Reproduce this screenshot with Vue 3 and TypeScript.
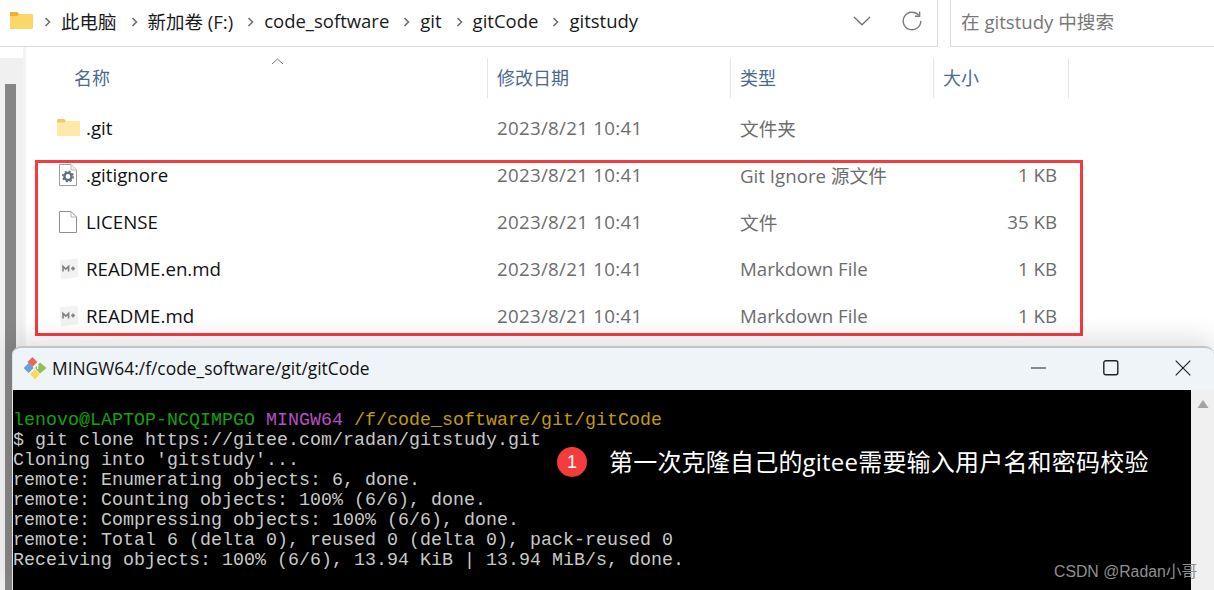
<script setup lang="ts">
interface Row { name: string; date: string; type: string; size: string; icon: string }
const date = '2023/8/21 10:41'
const rows: Row[] = [
  { name: '.git', date, type: '文件夹', size: '', icon: 'folder' },
  { name: '.gitignore', date, type: 'Git Ignore 源文件', size: '1 KB', icon: 'gear' },
  { name: 'LICENSE', date, type: '文件', size: '35 KB', icon: 'file' },
  { name: 'README.en.md', date, type: 'Markdown File', size: '1 KB', icon: 'md' },
  { name: 'README.md', date, type: 'Markdown File', size: '1 KB', icon: 'md' },
]
const crumbs = ['此电脑', '新加卷 (F:)', 'code_software', 'git', 'gitCode', 'gitstudy']
const lines = [
  'Cloning into \'gitstudy\'...',
  'remote: Enumerating objects: 6, done.',
  'remote: Counting objects: 100% (6/6), done.',
  'remote: Compressing objects: 100% (6/6), done.',
  'remote: Total 6 (delta 0), reused 0 (delta 0), pack-reused 0',
  'Receiving objects: 100% (6/6), 13.94 KiB | 13.94 MiB/s, done.',
]
</script>

<template>
  <div class="page">
    <header class="topbar">
      <div class="address">
        <svg class="top-folder" width="23" height="18" viewBox="0 0 23 18">
          <path d="M0 2 Q0 1 1 1 H7 L9 3 H22 Q23 3 23 4 V17 Q23 18 22 18 H1 Q0 18 0 17 Z" fill="#fbd669" />
          <path d="M0 1.5 Q0 1 1 1 H7 L9 3 L7 5 H0 Z" fill="#eeb02f" />
        </svg>
        <template v-for="c in crumbs" :key="c">
          <svg class="chev" width="7" height="10" viewBox="0 0 7 10"><path d="M1.5 1 L5.5 5 L1.5 9" fill="none" stroke="#6f6f6f" stroke-width="1.6" /></svg>
          <span class="crumb">{{ c }}</span>
        </template>
        <div class="addr-tools">
          <svg width="18" height="10" viewBox="0 0 18 10"><path d="M1 1 L9 8.8 L17 1" fill="none" stroke="#6e6e6e" stroke-width="1.2" /></svg>
          <svg width="20" height="20" viewBox="0 0 20 20"><path d="M16.8 4.4 A8.8 8.8 0 1 0 18.8 10" fill="none" stroke="#7a7a7a" stroke-width="1.4" /><path d="M17.6 .6 V5.2 H13" fill="none" stroke="#7a7a7a" stroke-width="1.4" /></svg>
        </div>
      </div>
      <div class="search">在 gitstudy 中搜索</div>
    </header>

    <div class="body">
      <aside class="rail"><div class="thumb"></div></aside>
      <main class="list">
        <div class="head">
          <svg class="sort" width="13" height="7" viewBox="0 0 13 7"><path d="M1 6 L6.5 1 L12 6" fill="none" stroke="#777" stroke-width="1" /></svg>
          <div class="hcell first">名称</div>
          <div class="hcell">修改日期</div>
          <div class="hcell">类型</div>
          <div class="hcell">大小</div>
        </div>
        <div class="rows">
          <div class="row" v-for="r in rows" :key="r.name">
            <div class="name">
              <span class="ico">
                <svg v-if="r.icon === 'folder'" class="ico-folder" width="23" height="18" viewBox="0 0 23 18">
                  <path d="M0 1.5 Q0 1 1 1 H7 L9 3 H22 Q23 3 23 4 V17 Q23 18 22 18 H1 Q0 18 0 17 Z" fill="#fde9a8" />
                  <path d="M0 1.5 Q0 1 1 1 H7 L9 3 L7 4.5 H0 Z" fill="#f1ca6c" />
                </svg>
                <svg v-else-if="r.icon === 'gear'" width="18" height="22" viewBox="0 0 18 22">
                  <path d="M.5 .5 H12 L17.5 6 V21.5 H.5 Z" fill="#fff" stroke="#9aa0a5" />
                  <path d="M12 .5 V6 H17.5" fill="#eee" stroke="#b8bcc0" />
                  <circle cx="9" cy="12.5" r="3.6" fill="none" stroke="#5f7180" stroke-width="2.4" />
                  <circle cx="9" cy="12.5" r="5.2" fill="none" stroke="#5f7180" stroke-width="1.6" stroke-dasharray="2 2.08" />
                </svg>
                <svg v-else-if="r.icon === 'file'" width="18" height="22" viewBox="0 0 18 22">
                  <path d="M.5 .5 H12 L17.5 6 V21.5 H.5 Z" fill="#fff" stroke="#8f8f8f" />
                  <path d="M12 .5 V6 H17.5" fill="none" stroke="#b5b5b5" />
                </svg>
                <svg v-else width="20" height="22" viewBox="0 0 20 22">
                  <path d="M.5 2.5 L18.5 .5 L19.5 19 L2 21.5 Z" fill="#f2f2f2" />
                  <path d="M4 13.5 V8.5 L6.8 11.2 L9.6 8.5 V13.5 M12 10.5 H16 M14 8.5 V12.5" fill="none" stroke="#808080" stroke-width="1.6" />
                </svg>
              </span>
              <span class="fname">{{ r.name }}</span>
            </div>
            <div class="meta date">{{ r.date }}</div>
            <div class="meta">{{ r.type }}</div>
            <div class="meta size">{{ r.size }}</div>
          </div>
          <div class="highlight"></div>
        </div>
      </main>
    </div>

    <section class="terminal">
      <div class="titlebar">
        <svg class="gitlogo" width="24" height="24" viewBox="0 0 24 24">
          <path d="M9.4 1 L14.4 6 L9.4 11 L4.4 6 Z" fill="#e8685a" />
          <path d="M12 12 L17 6.5 L23.4 12 L17 17.5 Z" fill="#8cc152" />
          <path d="M.6 12 L5.6 7 L10.6 12 L5.6 17 Z" fill="#6a9fdf" />
          <path d="M12 13.5 L17 18 L12 23.4 L7 18 Z" fill="#f8d95c" />
          <path d="M14 9 L15.5 10.5 M14.6 13 V9" stroke="#fff" stroke-width="1.2" fill="none" />
        </svg>
        <span class="ttl">MINGW64:/f/code_software/git/gitCode</span>
        <div class="winbtns">
          <svg width="16" height="16" viewBox="0 0 16 16"><path d="M0 8 H15" stroke="#222" stroke-width="1.2" /></svg>
          <svg width="16" height="16" viewBox="0 0 16 16"><rect x=".8" y=".8" width="14" height="14" rx="2" fill="none" stroke="#222" stroke-width="1.4" /></svg>
          <svg width="16" height="16" viewBox="0 0 16 16"><path d="M.7 .7 L15.3 15.3 M15.3 .7 L.7 15.3" stroke="#222" stroke-width="1.2" /></svg>
        </div>
      </div>
      <div class="console">
        <div class="screen">
          <pre class="out"><span class="g">lenovo@LAPTOP-NCQIMPGO</span> <span class="m">MINGW64</span> <span class="y">/f/code_software/git/gitCode</span>
$ git clone https://gitee.com/radan/gitstudy.git
<template v-for="l in lines" :key="l">{{ l }}
</template></pre>
          <div class="note">
            <span class="badge">1</span>
            <span class="note-text">第一次克隆自己的gitee需要输入用户名和密码校验</span>
          </div>
        </div>
        <div class="vscroll"><svg width="12" height="8" viewBox="0 0 12 8"><path d="M6 0 L11.5 8 H.5 Z" fill="#a3a3a3" /></svg></div>
      </div>
      <div class="mark">CSDN @Radan小哥</div>
    </section>
  </div>
</template>

<style scoped>
.page {
  position: relative;
  width: 1214px;
  height: 590px;
  overflow: hidden;
  background: #fff;
  font-family: "Open Sans", "Noto Sans CJK SC", sans-serif;
  color: #1a1a1a;
}
.topbar {
  display: flex;
  height: 47px;
  box-sizing: border-box;
}
.address {
  width: 938px;
  box-sizing: border-box;
  display: flex;
  align-items: center;
  padding: 0 0 5px 10px;
  border-right: 1px solid #d9d9d9;
  border-bottom: 1px solid #d9d9d9;
}
.top-folder { margin-right: 11px; margin-top: -1px; }
.chev { flex: none; margin-top: 3px; }
.crumb { font-size: 18.5px; margin: 0 12px 0 10px; white-space: nowrap; }
.chev + .crumb ~ .chev { margin-left: 2px; }
.addr-tools {
  margin-left: auto;
  display: flex;
  align-items: center;
  gap: 31px;
  padding-right: 15px;
}
.search {
  margin-left: 12px;
  flex: 1;
  border-left: 1px solid #d9d9d9;
  border-bottom: 1px solid #d9d9d9;
  padding: 7px 0 0 10px;
  font-size: 18.6px;
  color: #777;
}
.body { display: flex; height: 543px; }
.rail {
  width: 23px;
  background: #f0f0f0;
  margin-top: 11px;
  box-sizing: border-box;
  padding: 26px 0 0 5px;
  flex: none;
}
.thumb { width: 11px; height: 100%; background: #868686; }
.list { flex: 1; border-left: 3px solid #f4f4f4; }
.head {
  position: relative;
  display: grid;
  grid-template-columns: 462px 243px 203px 135px;
  height: 40px;
  margin-top: 11px;
}
.sort { position: absolute; left: 245px; top: 0; }
.hcell {
  display: flex;
  align-items: center;
  padding: 0 0 2px 9px;
  font-size: 18px;
  color: #4b6a8c;
  border-right: 1px solid #e5e5e5;
}
.hcell.first { padding-left: 48px; }
.rows { position: relative; margin-top: 6px; }
.row {
  display: grid;
  grid-template-columns: 462px 243px 202px 124px;
  height: 47px;
  align-items: center;
}
.name { display: flex; align-items: center; padding-left: 31px; }
.ico { width: 29px; display: flex; padding-left: 2px; box-sizing: border-box; }
.ico-folder { margin-left: -2px; margin-top: -2px; }
.fname { font-size: 18.7px; color: #111; }
.meta { font-size: 18.7px; color: #6d6d6d; padding-left: 9px; white-space: nowrap; }
.date { letter-spacing: 0.3px; }
.size { text-align: right; padding-left: 0; }
.highlight {
  position: absolute;
  left: 9px;
  top: 56px;
  width: 1048px;
  height: 176px;
  box-sizing: border-box;
  border: 3px solid #f53b3b;
  pointer-events: none;
}
.terminal {
  position: absolute;
  left: 12px;
  top: 346px;
  width: 1202px;
  height: 244px;
  border-radius: 9px 9px 0 0;
  overflow: hidden;
  border-top: 2px solid #c4c4c4;
  border-left: 1px solid #e4e4e4;
  background: #eff4f9;
  box-sizing: border-box;
  box-shadow: 0 -8px 24px rgba(0, 0, 0, 0.12);
}
.titlebar { height: 42px; box-sizing: border-box; display: flex; align-items: center; padding: 0 0 3px 10px; }
.gitlogo { flex: none; }
.ttl { margin-left: 5px; font-size: 17.4px; color: #111; }
.winbtns {
  margin-left: auto;
  display: flex;
  align-items: center;
  gap: 56px;
  padding-right: 23px;
}
.console { display: flex; height: 200px; }
.screen { position: relative; width: 1178px; background: #000; overflow: hidden; }
.vscroll {
  flex: 1;
  background: #f0f0f0;
  display: flex;
  justify-content: center;
  padding-top: 10px;
  box-sizing: border-box;
}
.out {
  margin: 0;
  padding: 20px 0 0 0;
  font-family: "Liberation Mono", "DejaVu Sans Mono", monospace;
  font-size: 18.3px;
  letter-spacing: 0.03px;
  line-height: 20px;
  color: #c8c8c8;
}
.g { color: #13a10e; }
.m { color: #b54fc4; }
.y { color: #c19c00; }
.note {
  position: absolute;
  left: 544px;
  top: 57px;
  display: flex;
  align-items: center;
}
.badge {
  width: 30px;
  height: 30px;
  border-radius: 50%;
  background: #f53b3b;
  color: #fff;
  display: flex;
  align-items: center;
  justify-content: center;
  font-family: "Liberation Sans", sans-serif;
  font-size: 18px;
}
.note-text { margin-left: 22px; color: #fff; font-size: 24px; line-height: 30px; letter-spacing: 0.2px; white-space: nowrap; }
.mark {
  position: absolute;
  left: 1041px;
  top: 211px;
  white-space: nowrap;
  color: #8f8f8f;
  font-family: "Liberation Sans", "Noto Sans CJK SC", sans-serif;
  font-size: 15.8px;
}
</style>
